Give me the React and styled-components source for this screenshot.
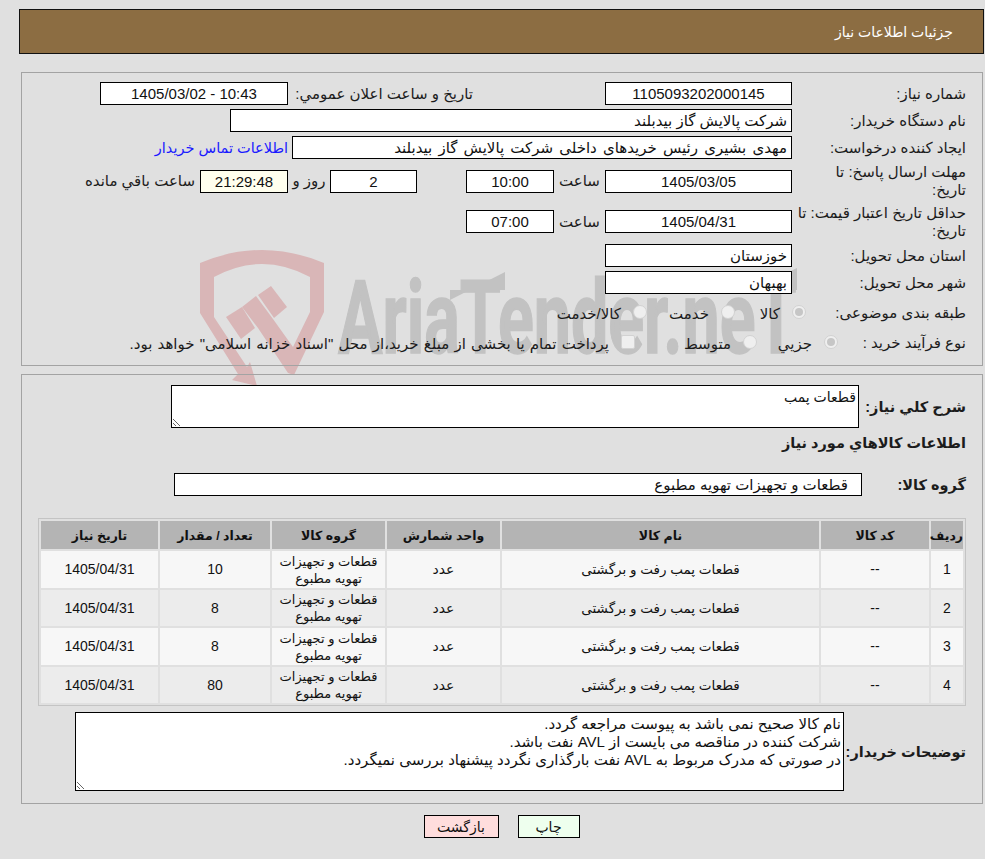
import React from "react";
import styled, { createGlobalStyle } from "styled-components";

const GlobalStyle = createGlobalStyle`
  html, body {
    margin: 0;
    padding: 0;
    background: #e0e0e0;
  }
  body {
    font-family: "Liberation Sans", "DejaVu Sans", sans-serif;
    font-size: 15px;
    color: #1c1c1c;
  }
`;

const Page = styled.div`
  position: relative;
  box-sizing: border-box;
  width: 985px;
  height: 859px;
  padding: 9px 1px 0 19px;
  overflow: hidden;
`;

const Watermark = styled.div`
  position: absolute;
  left: 200px;
  top: 250px;
  width: 620px;
  height: 136px;
  z-index: 0;
  svg {
    position: absolute;
    left: 0;
    top: 0;
  }
`;

const WatermarkText = styled.span`
  position: absolute;
  left: 138px;
  top: 8px;
  font-family: Roboto, "Liberation Sans", sans-serif;
  font-weight: 700;
  font-size: 102px;
  line-height: 120px;
  color: #c2c2c2;
  -webkit-text-stroke: 1.5px #c2c2c2;
  white-space: nowrap;
  direction: ltr;
  transform-origin: left top;
  transform: scaleX(0.65);
`;

const Content = styled.div`
  position: relative;
  z-index: 1;
`;

const Header = styled.div`
  box-sizing: border-box;
  height: 45px;
  background: #8c6d42;
  border: 1px solid #111;
  color: #fff;
  font-size: 14px;
  line-height: 44px;
  padding-right: 30px;
`;

const Panel = styled.div`
  box-sizing: border-box;
  width: 962px;
  margin: ${(p) => p.$top}px 1px 0 0;
  border: 1px solid #a3a3a3;
  padding: ${(p) => p.$pad};
  display: flex;
  flex-direction: column;
  gap: ${(p) => p.$gap || 0}px;
`;

const Row = styled.div`
  display: flex;
  align-items: center;
  min-height: ${(p) => p.$h || 23}px;
  margin-top: ${(p) => p.$mt || 0}px;
`;

const Label = styled.div`
  box-sizing: border-box;
  width: ${(p) => p.$w || 170}px;
  margin-left: ${(p) => (p.$w ? 0 : 4)}px;
  flex: none;
  line-height: 18px;
  white-space: nowrap;
  font-size: ${(p) => (p.$bold ? 14.5 : 15)}px;
  font-weight: ${(p) => (p.$bold ? 700 : 400)};
`;

const Field = styled.div`
  box-sizing: border-box;
  flex: none;
  width: ${(p) => p.$w}px;
  height: 23px;
  line-height: 21px;
  background: ${(p) => p.$bg || "#fff"};
  border: 1px solid #000;
  color: #111;
  text-align: ${(p) => (p.$center ? "center" : "right")};
  padding: 0 ${(p) => p.$inset || 3}px;
  white-space: nowrap;
  overflow: hidden;
  word-spacing: ${(p) => p.$spread || 0}px;
  margin-right: ${(p) => p.$mr || 0}px;
`;

const Unit = styled.div`
  flex: none;
  width: ${(p) => p.$w}px;
  text-align: center;
`;

const Caption = styled.div`
  box-sizing: border-box;
  flex: none;
  width: ${(p) => p.$w}px;
  padding-right: ${(p) => p.$pr || 0}px;
  white-space: nowrap;
`;

const ContactLink = styled.a`
  color: #1a1aff;
  font-size: 14.5px;
  margin-right: 4px;
  text-decoration: none;
`;

const Choice = styled.span`
  flex: none;
  width: ${(p) => (p.$w ? `${p.$w}px` : "auto")};
  display: flex;
  align-items: center;
  gap: 12px;
  white-space: nowrap;
  word-spacing: ${(p) => p.$spread || 0}px;
  padding-top: 2px;
`;

const Radio = styled.i`
  position: relative;
  flex: none;
  box-sizing: border-box;
  width: 14px;
  height: 14px;
  margin-top: -4px;
  border-radius: 50%;
  border: 1px solid #d2d2d2;
  background: #efefef;
  &::after {
    content: "";
    display: ${(p) => (p.$checked ? "block" : "none")};
    position: absolute;
    inset: 2px;
    border-radius: 50%;
    background: #c6c6c6;
  }
`;

const Checkbox = styled.i`
  flex: none;
  box-sizing: border-box;
  width: 14px;
  height: 14px;
  margin-top: -4px;
  border-radius: 2px;
  border: 1px solid #d2d2d2;
  background: #efefef;
`;

const Note = styled.textarea`
  display: block;
  box-sizing: border-box;
  flex: none;
  width: ${(p) => p.$w}px;
  height: ${(p) => p.$h}px;
  margin: 0;
  padding: 2px;
  background: #fff;
  border: 1px solid #000;
  border-radius: 0;
  outline: none;
  font-family: inherit;
  font-size: ${(p) => p.$size}px;
  line-height: 18px;
  color: #111;
`;

const Heading = styled.div`
  font-weight: 700;
  font-size: 14.5px;
  line-height: 18px;
  margin-top: 6px;
`;

const ItemsTable = styled.table`
  box-sizing: border-box;
  width: 928px;
  margin-top: 22px;
  border: 1px solid #c4c4c4;
  border-collapse: separate;
  border-spacing: 2px;
  table-layout: fixed;
  font-size: 14px;
`;

const Th = styled.th`
  background: #b4b4b4;
  height: 28px;
  padding: 0;
  font-size: 12.5px;
  color: #111;
  width: ${(p) => p.$w}px;
`;

const Td = styled.td`
  padding: 0;
  height: ${(p) => (p.$odd ? 37 : 36)}px;
  text-align: center;
  color: #111;
  font-size: ${(p) => p.$size || 14}px;
  line-height: 17px;
  background: ${(p) => (p.$odd ? "#f7f7f7" : "#ececec")};
`;

const Actions = styled.div`
  display: flex;
  justify-content: center;
  gap: 19px;
  margin-top: 11px;
`;

const ActionButton = styled.button`
  box-sizing: border-box;
  width: ${(p) => p.$w}px;
  height: 23px;
  padding: 0;
  border: 1px solid #000;
  border-radius: 0;
  background: ${(p) => p.$bg};
  font-family: inherit;
  font-size: 14px;
  color: #111;
`;

const columns = [
  { title: "ردیف", w: 32 },
  { title: "کد کالا", w: 108 },
  { title: "نام کالا", w: 317 },
  { title: "واحد شمارش", w: 113 },
  { title: "گروه کالا", w: 113 },
  { title: "تعداد / مقدار", w: 110 },
  { title: "تاریخ نیاز", w: 117 },
];

const items = [
  { id: 1, qty: 10 },
  { id: 2, qty: 8 },
  { id: 3, qty: 8 },
  { id: 4, qty: 80 },
];

const noteText = `نام کالا صحیح نمی باشد به پیوست مراجعه گردد.
شرکت کننده در مناقصه می بایست از AVL نفت باشد.
در صورتی که مدرک مربوط به AVL نفت بارگذاری نگردد پیشنهاد بررسی نمیگردد.`;

function WatermarkLogo() {
  return (
    <svg width="620" height="138" viewBox="0 0 620 138">
      <g fill="#d9b6b7">
        <path d="M0 13 Q62 -13 124 13 L124 62 L94 125 L88 123 L58 78 L42 57 L56 46 L73 69 L93 97 L110 62 L110 27 Q62 1 14 27 L14 67 L47 117 L50 112 L57 136 L32 130 L38 124 L0 63 Z" />
        <path d="M26 67 L42 57 L55 78 L41 89 Z" />
        <path d="M58 45 L71 36 L87 57 L74 68 Z" />
      </g>
      <g fill="#c2c2c2">
        <path d="M250 50 L305 22 L305 40 L250 40 Z" />
        <path d="M546 42 L597 18 L597 40 L546 40 Z" />
      </g>
    </svg>
  );
}

export default function App() {
  return (
    <Page dir="rtl">
      <GlobalStyle />
      <Watermark>
        <WatermarkLogo />
        <WatermarkText>AriaTender.neT</WatermarkText>
      </Watermark>
      <Content>
        <Header>جزئیات اطلاعات نیاز</Header>

        <Panel $top={18} $pad="9px 16px 11px 0" $gap={4}>
          <Row>
            <Label>شماره نیاز:</Label>
            <Field $w={187} $center>1105093202000145</Field>
            <Caption $w={317} $pr={132}>تاریخ و ساعت اعلان عمومي:</Caption>
            <Field $w={188} $center><bdi>1405/03/02 - 10:43</bdi></Field>
          </Row>
          <Row>
            <Label>نام دستگاه خریدار:</Label>
            <Field $w={562} $inset={4}>شرکت پالایش گاز بیدبلند</Field>
          </Row>
          <Row>
            <Label>ایجاد کننده درخواست:</Label>
            <Field $w={500} $inset={4} $spread={2}>مهدی بشیری رئیس خریدهای داخلی شرکت پالایش گاز بیدبلند</Field>
            <ContactLink href="#">اطلاعات تماس خریدار</ContactLink>
          </Row>
          <Row $h={36}>
            <Label>مهلت ارسال پاسخ: تا<br />تاریخ:</Label>
            <Field $w={187} $center>1405/03/05</Field>
            <Unit $w={51}>ساعت</Unit>
            <Field $w={88} $center>10:00</Field>
            <Field $w={87} $center $mr={49}>2</Field>
            <Unit $w={42}>روز و</Unit>
            <Field $w={88} $center $bg="#ffffee">21:29:48</Field>
            <Caption $w={120} $pr={5}>ساعت باقي مانده</Caption>
          </Row>
          <Row $h={37}>
            <Label>حداقل تاریخ اعتبار قیمت: تا<br />تاریخ:</Label>
            <Field $w={187} $center>1405/04/31</Field>
            <Unit $w={51}>ساعت</Unit>
            <Field $w={88} $center>07:00</Field>
          </Row>
          <Row>
            <Label>استان محل تحویل:</Label>
            <Field $w={187} $inset={4}>خوزستان</Field>
          </Row>
          <Row>
            <Label>شهر محل تحویل:</Label>
            <Field $w={187} $inset={4}>بهبهان</Field>
          </Row>
          <Row $h={30}>
            <Label $w={160}>طبقه بندی موضوعی:</Label>
            <Choice $w={71}><Radio $checked />کالا</Choice>
            <Choice $w={88}><Radio />خدمت</Choice>
            <Choice><Radio />کالا/خدمت</Choice>
          </Row>
          <Row $h={22}>
            <Label $w={128}>نوع فرآیند خرید :</Label>
            <Choice $w={81}><Radio $checked />جزیي</Choice>
            <Choice $w={122}><Radio />متوسط</Choice>
            <Choice $spread={1}><Checkbox />پرداخت تمام یا بخشی از مبلغ خرید،از محل "اسناد خزانه اسلامی" خواهد بود.</Choice>
          </Row>
        </Panel>

        <Panel $top={8} $pad="10px 16px 12px 0">
          <Row>
            <Label $w={107} $bold>شرح كلي نياز:</Label>
            <Note $w={688} $h={43} $size={14} readOnly value="قطعات پمب" />
          </Row>
          <Heading>اطلاعات كالاهاي مورد نياز</Heading>
          <Row $mt={21}>
            <Label $w={104} $bold>گروه کالا:</Label>
            <Field $w={688} $inset={13}>قطعات و تجهیزات تهویه مطبوع</Field>
          </Row>
          <ItemsTable>
            <thead>
              <tr>
                {columns.map((c) => (
                  <Th key={c.title} $w={c.w}>{c.title}</Th>
                ))}
              </tr>
            </thead>
            <tbody>
              {items.map((item) => {
                const odd = item.id % 2 === 1;
                return (
                  <tr key={item.id}>
                    <Td $odd={odd}>{item.id}</Td>
                    <Td $odd={odd}>--</Td>
                    <Td $odd={odd} $size={13.5}>قطعات پمب رفت و برگشتی</Td>
                    <Td $odd={odd}>عدد</Td>
                    <Td $odd={odd} $size={13}>قطعات و تجهیزات تهویه مطبوع</Td>
                    <Td $odd={odd}>{item.qty}</Td>
                    <Td $odd={odd}>1405/04/31</Td>
                  </tr>
                );
              })}
            </tbody>
          </ItemsTable>
          <Row $mt={6}>
            <Label $w={122} $bold>توضیحات خریدار:</Label>
            <Note $w={769} $h={79} $size={15} readOnly value={noteText} />
          </Row>
        </Panel>

        <Actions>
          <ActionButton $w={62} $bg="#eeffee">چاپ</ActionButton>
          <ActionButton $w={75} $bg="#ffdddd">بازگشت</ActionButton>
        </Actions>
      </Content>
    </Page>
  );
}
